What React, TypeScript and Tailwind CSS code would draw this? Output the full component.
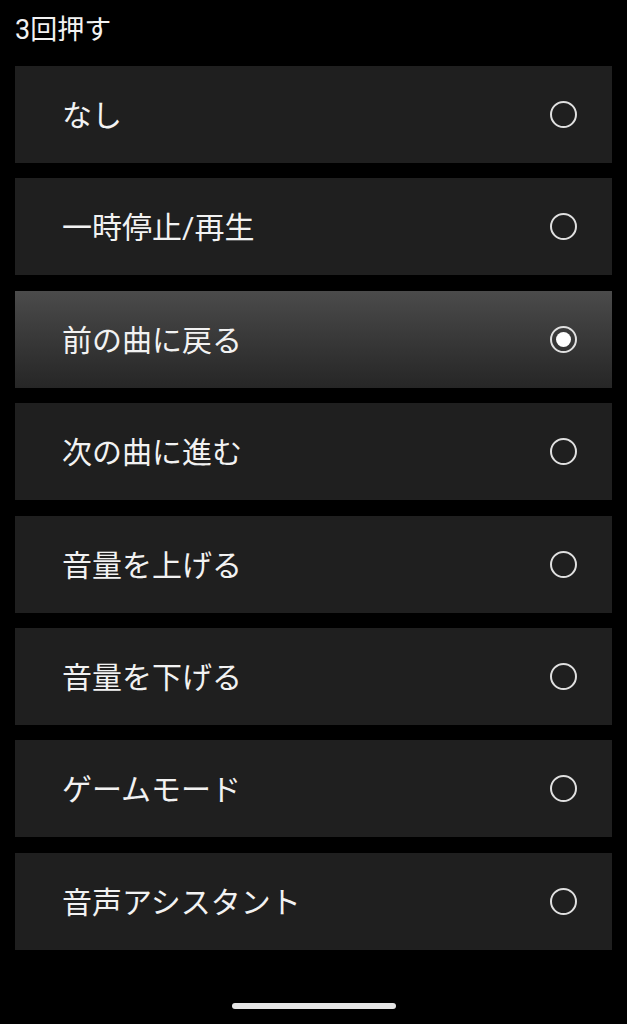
import React from "react";

const items = [
  "なし",
  "一時停止/再生",
  "前の曲に戻る",
  "次の曲に進む",
  "音量を上げる",
  "音量を下げる",
  "ゲームモード",
  "音声アシスタント",
];

const SELECTED = 2;

function Radio({ checked }: { checked: boolean }) {
  return (
    <div className="w-[27px] h-[27px] rounded-full border-2 border-[#e0e0e0] flex items-center justify-center">
      {checked && <div className="w-[15px] h-[15px] rounded-full bg-white" />}
    </div>
  );
}

export default function App() {
  return (
    <div
      className="relative w-full h-[1024px] bg-black text-[#f2f2f2] px-[15px] overflow-hidden"
      style={{ fontFamily: 'Roboto, "Noto Sans CJK JP", "Noto Sans", sans-serif' }}
    >
      <div className="h-[66px] pt-[14px] text-[27px] leading-[32px]">3回押す</div>
      <div className="flex flex-col gap-[15.4px]">
        {items.map((t, i) => (
          <div
            key={t}
            className={`h-[97px] flex items-center justify-between pl-[47px] pr-[35px] ${
              i === SELECTED
                ? "bg-gradient-to-b from-[#4b4b4b] to-[#262626]"
                : "bg-[#1f1f1f]"
            }`}
          >
            <span className="text-[30px] leading-[40px] pt-[3px]">{t}</span>
            <Radio checked={i === SELECTED} />
          </div>
        ))}
      </div>
      <div className="absolute left-[232px] top-[1003px] w-[164px] h-[6px] rounded-full bg-[#e6e6e6]" />
    </div>
  );
}
